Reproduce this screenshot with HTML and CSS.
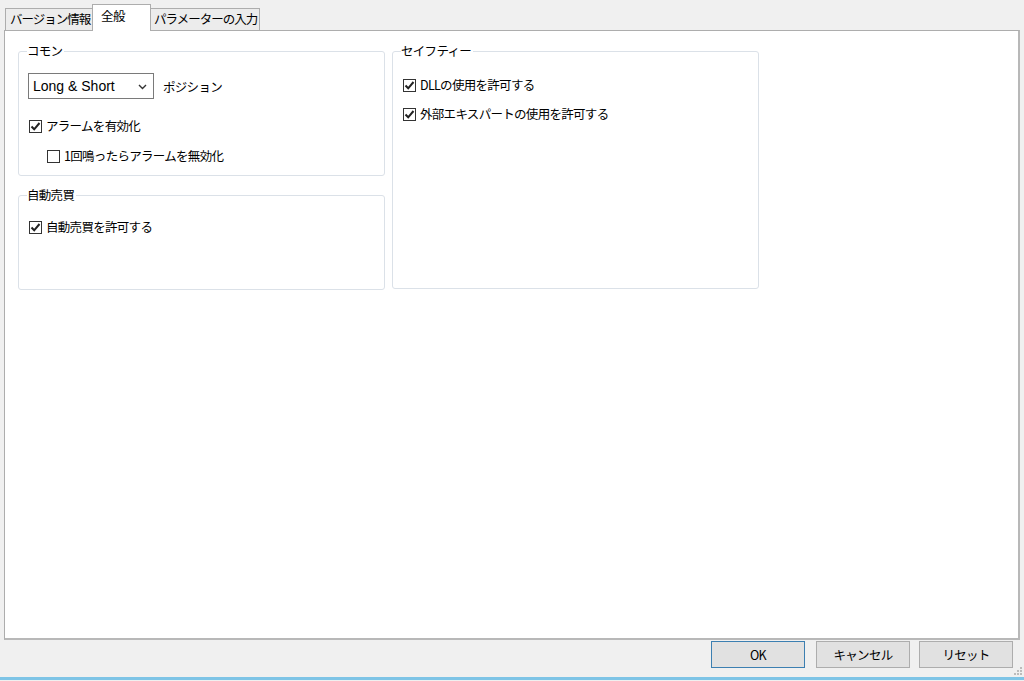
FILE: index.html
```html
<!DOCTYPE html>
<html lang="ja">
<head>
<meta charset="utf-8">
<link rel="stylesheet" href="styles.css">
</head>
<body>
<div class="window">
  <div class="tabs">
    <div class="tab t1">バージョン情報</div>
    <div class="tab active">全般</div>
    <div class="tab t3">パラメーターの入力</div>
  </div>
  <div class="panel">
    <div class="col">
      <fieldset class="group g-common">
        <legend>コモン</legend>
        <div class="row select-row">
          <div class="select"><span>Long &amp; Short</span>
            <svg class="chev" width="9" height="6" viewBox="0 0 9 6"><path d="M1 1 L4.5 4.5 L8 1" fill="none" stroke="#333" stroke-width="1.4"/></svg>
          </div>
          <span class="label">ポジション</span>
        </div>
        <label class="check"><span class="box checked"><svg width="11" height="11" viewBox="0 0 11 11"><path d="M1.5 5.5 L4.2 8.3 L9.5 2" fill="none" stroke="#222" stroke-width="2"/></svg></span>アラームを有効化</label>
        <label class="check indent"><span class="box"></span>1回鳴ったらアラームを無効化</label>
      </fieldset>
      <fieldset class="group g-auto">
        <legend>自動売買</legend>
        <label class="check first"><span class="box checked"><svg width="11" height="11" viewBox="0 0 11 11"><path d="M1.5 5.5 L4.2 8.3 L9.5 2" fill="none" stroke="#222" stroke-width="2"/></svg></span>自動売買を許可する</label>
      </fieldset>
    </div>
    <div class="col">
      <fieldset class="group g-safety">
        <legend>セイフティー</legend>
        <label class="check first"><span class="box checked"><svg width="11" height="11" viewBox="0 0 11 11"><path d="M1.5 5.5 L4.2 8.3 L9.5 2" fill="none" stroke="#222" stroke-width="2"/></svg></span>DLLの使用を許可する</label>
        <label class="check second"><span class="box checked"><svg width="11" height="11" viewBox="0 0 11 11"><path d="M1.5 5.5 L4.2 8.3 L9.5 2" fill="none" stroke="#222" stroke-width="2"/></svg></span>外部エキスパートの使用を許可する</label>
      </fieldset>
    </div>
  </div>
  <div class="footer">
    <button class="btn default">OK</button>
    <button class="btn">キャンセル</button>
    <button class="btn reset">リセット</button>
    <svg class="grip" width="8" height="8" viewBox="0 0 8 8">
      <rect x="6" y="0" width="2" height="2" fill="#bcbcbc"/>
      <rect x="3" y="3" width="2" height="2" fill="#bcbcbc"/>
      <rect x="6" y="3" width="2" height="2" fill="#bcbcbc"/>
      <rect x="0" y="6" width="2" height="2" fill="#bcbcbc"/>
      <rect x="3" y="6" width="2" height="2" fill="#bcbcbc"/>
      <rect x="6" y="6" width="2" height="2" fill="#bcbcbc"/>
    </svg>
  </div>
  <div class="bottom-line"></div>
</div>
</body>
</html>
```

FILE: styles.css
```css
* { box-sizing: border-box; }
html, body {
  margin: 0;
  padding: 0;
  background: #f0f0f0;
}
body {
  font-family: "Noto Sans CJK JP", "Noto Sans", sans-serif;
  font-size: 12.5px;
  letter-spacing: -0.7px;
  color: #000;
}
.window {
  width: 1024px;
  height: 681px;
  display: flex;
  flex-direction: column;
  position: relative;
}
.tabs {
  display: flex;
  align-items: flex-end;
  height: 31px;
  padding-left: 5px;
  position: relative;
  z-index: 2;
}
.tab {
  height: 22px;
  margin-bottom: 1px;
  border: 1px solid #adadad;
  border-bottom: none;
  background: #ececec;
  line-height: 20px;
  white-space: nowrap;
  overflow: hidden;
  letter-spacing: -1px;
}
.t1 { width: 88px; padding-left: 4px; }
.t3 { width: 110px; padding-left: 4px; border-left: none; }
.tab.active {
  height: 27px;
  margin-bottom: 0;
  background: #fff;
  width: 59px;
  padding-left: 8px;
  line-height: 22px;
  margin-left: -1px;
  margin-right: -1px;
  position: relative;
  z-index: 3;
  letter-spacing: -0.5px;
}
.panel {
  margin: -1px 4px 0 4px;
  height: 610px;
  background: #fff;
  border: 1px solid #adadad;
  border-right: 2px solid #b8b8b8;
  border-bottom: 2px solid #b8b8b8;
  display: flex;
  gap: 7px;
  padding: 12px 0 0 13px;
  width: 1016px;
}
.col {
  width: 367px;
  display: flex;
  flex-direction: column;
  gap: 11px;
}
.group {
  margin: 0;
  border: 1px solid #dbe1e8;
  border-radius: 3px;
  padding: 0 0 0 9px;
  min-width: 0;
}
.group legend {
  padding: 0 2px 0 0;
  margin-left: -1px;
  line-height: 16px;
  background: #fff;
}
.g-common { height: 133px; }
.g-auto { height: 103px; }
.g-safety { height: 246px; }
.row { display: flex; align-items: center; }
.select-row { margin-top: 14px; }
.select {
  width: 126px;
  height: 26px;
  border: 1px solid #7a7a7a;
  display: flex;
  align-items: center;
  justify-content: space-between;
  padding: 0 6px 0 4px;
  font-family: "Liberation Sans", Arial, sans-serif;
  font-size: 14px;
  letter-spacing: 0;
  background: #fff;
}
.chev { margin-top: 1px; }
.label { margin-left: 9px; }
.check {
  display: flex;
  align-items: center;
  line-height: 16px;
  height: 16px;
  margin-top: 19px;
  margin-left: 1px;
}
.check.indent { margin-left: 19px; margin-top: 14px; }
.check.first { margin-top: 16px; }
.g-safety .check.first { margin-top: 18px; }
.check.second { margin-top: 13px; }
.box {
  width: 13px;
  height: 13px;
  border: 1px solid #333;
  background: #fff;
  margin-right: 4px;
  display: flex;
  align-items: center;
  justify-content: center;
  flex: none;
}
.footer {
  display: flex;
  justify-content: flex-end;
  gap: 11px;
  padding-right: 11px;
  height: 37px;
  position: relative;
}
.btn {
  width: 94px;
  height: 27px;
  margin-top: 1px;
  border: 1px solid #adadad;
  background: #e1e1e1;
  font-family: "Noto Sans CJK JP", "Noto Sans", sans-serif;
  font-size: 12.5px;
  letter-spacing: -0.7px;
  color: #000;
  padding: 0;
}
.btn.default { border-color: #3c7fb1; }
.btn.reset { margin-left: -2px; }
.grip {
  position: absolute;
  right: 2px;
  bottom: 2px;
}
.bottom-line {
  height: 3px;
  background: #7ec4e6;
}
```
